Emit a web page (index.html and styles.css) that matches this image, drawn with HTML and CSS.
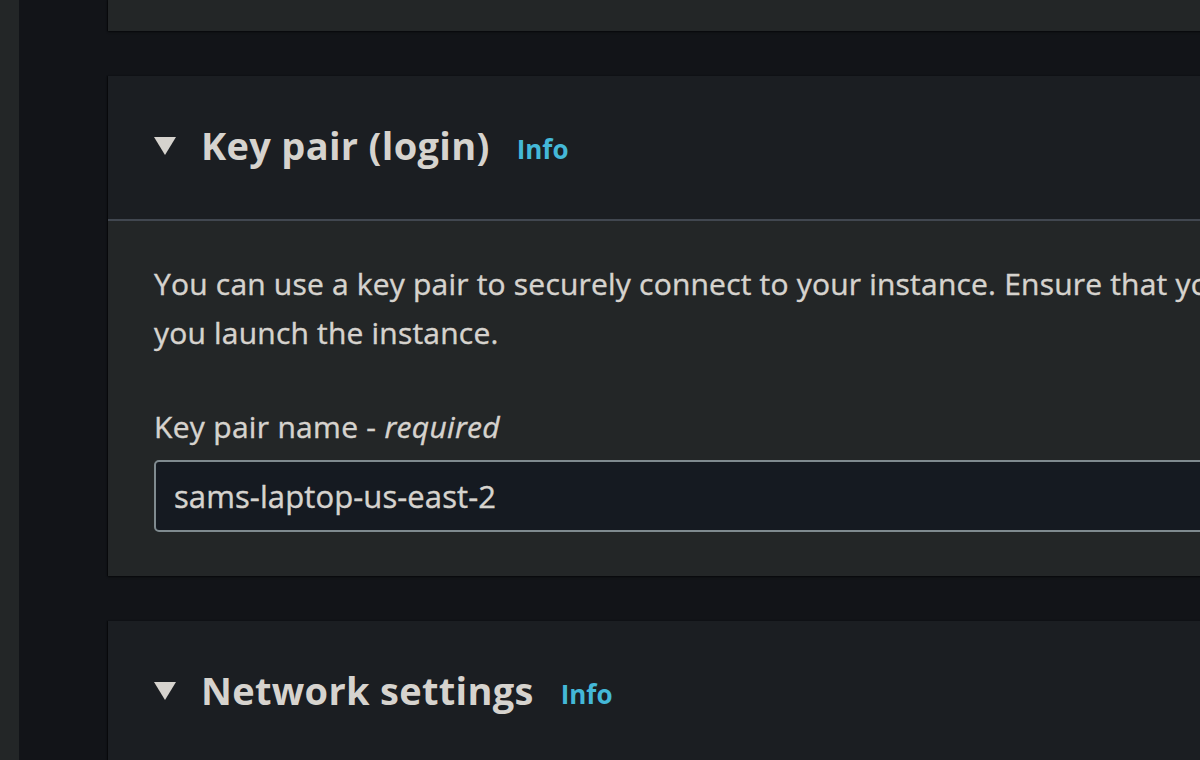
FILE: index.html
```html
<!DOCTYPE html>
<html>
<head>
<meta charset="utf-8">
<link rel="stylesheet" href="styles.css">
</head>
<body>
<div class="layout">
  <div class="rail"></div>
  <main class="main">
    <div class="card card-stub"></div>

    <section class="card">
      <header class="card-head">
        <span class="caret"></span>
        <h2 class="title">Key pair (login)</h2>
        <a class="info">Info</a>
      </header>
      <div class="card-body">
        <p class="desc">You can use a key pair to securely connect to your instance. Ensure that you have access to the selected key pair before<br>you launch the instance.</p>
        <label class="label">Key pair name - <em>required</em></label>
        <div class="input">sams-laptop-us-east-2</div>
      </div>
    </section>

    <section class="card">
      <header class="card-head">
        <span class="caret"></span>
        <h2 class="title">Network settings</h2>
        <a class="info">Info</a>
      </header>
    </section>
  </main>
</div>
</body>
</html>
```

FILE: styles.css
```css
html, body {
  margin: 0;
  padding: 0;
  background: #121418;
  overflow: hidden;
  height: 760px;
}
body {
  font-family: "Open Sans", "Noto Sans", sans-serif;
  color: #d6d3ce;
}
.layout {
  display: flex;
  height: 760px;
}
.rail {
  width: 19px;
  flex: 0 0 19px;
  background: #232627;
}
.main {
  flex: 0 0 auto;
  width: 1600px;
  padding-left: 89px;
  display: flex;
  flex-direction: column;
  gap: 45px;
}
.card {
  background: #232627;
  box-shadow: 0 1px 2px rgba(0,0,0,0.6), -1px 0 1px rgba(0,0,0,0.4);
  flex: 0 0 auto;
}
.card-stub {
  height: 31px;
}
.card-head {
  height: 145px;
  background: #1b1e22;
  border-bottom: 2px solid #414750;
  display: flex;
  align-items: center;
  padding-left: 46px;
  padding-bottom: 5px;
  box-sizing: border-box;
}
.caret {
  width: 0;
  height: 0;
  border-left: 11px solid transparent;
  border-right: 11px solid transparent;
  border-top: 18px solid #d6d3ce;
  margin-right: 25px;
  margin-top: 2px;
}
.title {
  margin: 0;
  font-size: 38px;
  font-weight: 700;
  letter-spacing: 0.3px;
  line-height: 46px;
}
.info {
  color: #44b8d8;
  font-size: 26px;
  font-weight: 700;
  margin-left: 27px;
  margin-top: 8px;
}
.card-body {
  padding: 38px 46px 44px;
}
.desc {
  margin: 0;
  font-size: 30px;
  letter-spacing: 0.2px;
  line-height: 49px;
  white-space: nowrap;
  -webkit-text-stroke: 0.4px #d6d3ce;
}
.label {
  display: block;
  margin-top: 50px;
  font-size: 30px;
  letter-spacing: 0.3px;
  line-height: 40px;
  -webkit-text-stroke: 0.4px #d6d3ce;
}
.label em {
  font-style: italic;
}
.input {
  margin-top: 13px;
  height: 72px;
  box-sizing: border-box;
  border: 2px solid #7f8a8f;
  border-radius: 5px;
  background: #151a21;
  padding-left: 18px;
  display: flex;
  align-items: center;
  font-size: 31px;
  letter-spacing: 0.1px;
  color: #d6d3ce;
  -webkit-text-stroke: 0.4px #d6d3ce;
}
```
